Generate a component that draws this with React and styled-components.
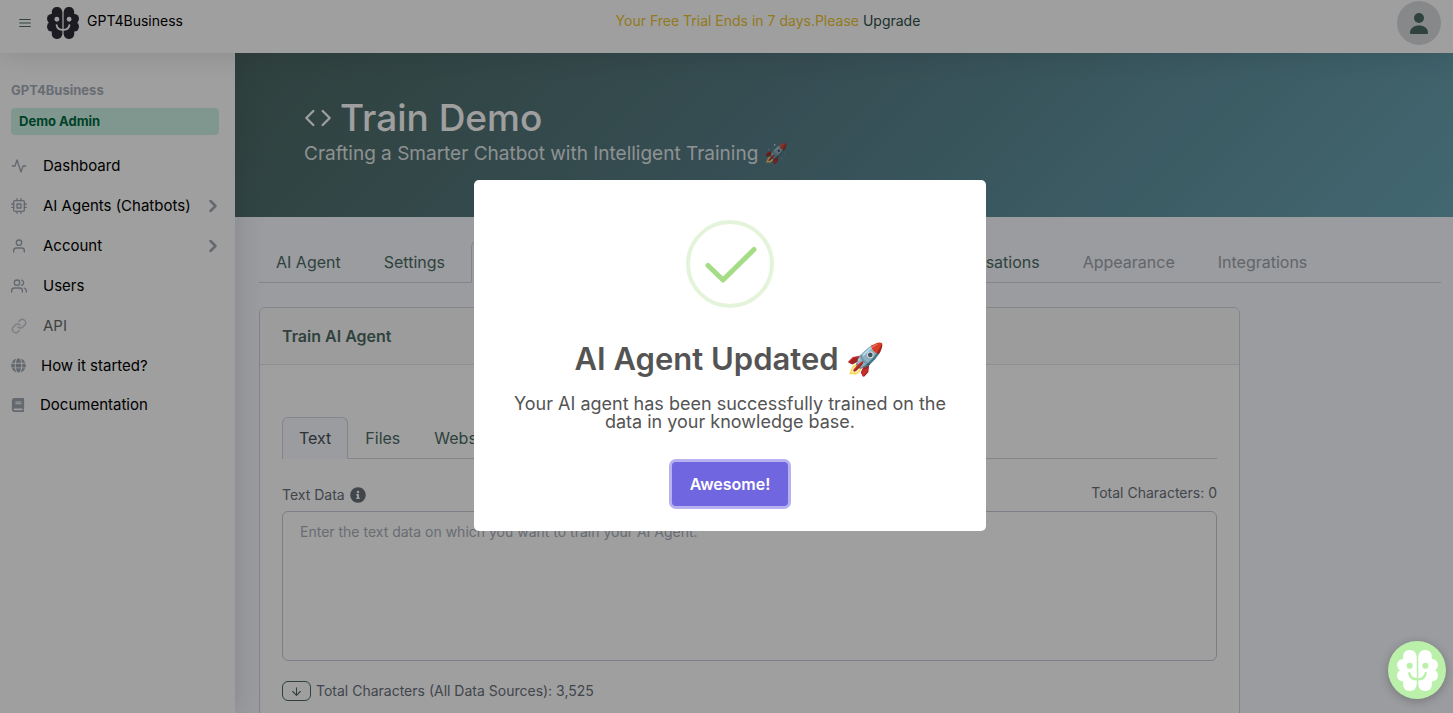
// App.jsx
import React from "react";
import styled, { createGlobalStyle } from "styled-components";
import {
  FiActivity,
  FiArrowDown,
  FiChevronRight,
  FiCode,
  FiCpu,
  FiLink,
  FiMenu,
  FiUser,
  FiUsers,
} from "react-icons/fi";
import { FaBook, FaGlobe, FaInfoCircle } from "react-icons/fa";

const GlobalStyle = createGlobalStyle`
  *, *::before, *::after {
    box-sizing: border-box;
  }

  body {
    margin: 0;
    background: #f8faff;
    color: #69707a;
    font-family: Inter, "Open Sans", "Liberation Sans", sans-serif;
    font-size: 16px;
    line-height: 24px;
  }

  a {
    text-decoration: none;
  }

  button, textarea {
    font: inherit;
  }
`;

const Page = styled.div`
  height: 100vh;
  display: flex;
  flex-direction: column;
  overflow: hidden;
`;

const TopNav = styled.header`
  position: relative;
  z-index: 2;
  display: flex;
  align-items: center;
  padding: 1px 12px 8px 18px;
  background: #fff;
  box-shadow: 0 2px 28px rgba(33, 40, 50, 0.15);
  font-size: 14px;
`;

const MenuButton = styled.button`
  display: flex;
  padding: 0;
  border: 0;
  background: none;
  color: #4c6b64;
`;

const Brand = styled.a`
  display: flex;
  align-items: center;
  gap: 8px;
  margin-left: 15px;
  color: #000;

  span {
    padding-bottom: 4px;
  }
`;

const TrialNotice = styled.p`
  flex: 1;
  margin: 0;
  padding: 0 44px 4px 0;
  text-align: center;
  color: #edc332;

  a {
    color: #2f4f4a;
  }
`;

const Avatar = styled.button`
  display: flex;
  align-items: center;
  justify-content: center;
  width: 44px;
  height: 44px;
  padding: 0;
  border: 0;
  border-radius: 50%;
  background: #d8dbde;
  color: #4c6b64;
`;

const Body = styled.div`
  flex: 1;
  display: flex;
  min-height: 0;
`;

const Sidebar = styled.nav`
  position: relative;
  z-index: 1;
  flex: 0 0 235px;
  min-width: 0;
  padding: 29px 16px 0 11px;
  background: #fff;
  box-shadow: 2px 0 28px rgba(33, 40, 50, 0.15);
`;

const SidebarHeading = styled.div`
  margin-bottom: 10px;
  color: #a7aeb8;
  font-size: 13px;
  font-weight: 700;
  line-height: 16px;
`;

const RoleBadge = styled.div`
  margin-bottom: 11px;
  padding: 5px 8px 6px;
  border-radius: 4px;
  background: #cdf3e5;
  color: #006b41;
  font-size: 13px;
  font-weight: 700;
  line-height: 16px;
`;

const SidebarLink = styled.a`
  display: flex;
  align-items: center;
  gap: ${(props) => (props.$solid ? "15px" : "16px")};
  height: ${(props) => (props.$solid ? "39px" : "40px")};
  color: #000;
  font-size: 15px;
  opacity: ${(props) => (props.$disabled ? 0.6 : 1)};

  span {
    flex: 1;
    min-width: 0;
    white-space: nowrap;
  }

  svg {
    flex: none;
    color: #a0a7b3;
  }

  svg:last-child {
    margin-right: -4px;
  }
`;

const Content = styled.main`
  flex: 1;
  min-width: 0;
`;

const Hero = styled.section`
  height: 164px;
  padding: 42px 69px 0;
  background: linear-gradient(135deg, #4c6862 0%, #577e88 45%, #6aa6b5 100%);
  color: #fff;

  h1 {
    display: flex;
    align-items: center;
    gap: 8px;
    margin: 0;
    font-size: 37px;
    font-weight: 500;
    line-height: 46px;
  }

  p {
    margin: 0;
    color: rgba(255, 255, 255, 0.85);
    font-size: 19px;
    line-height: 26px;
  }
`;

const Section = styled.div`
  padding: 24px 12px 0 24px;
`;

const Tabs = styled.div`
  display: flex;
  gap: ${(props) => props.$gap || "0"};
  border-bottom: 1px solid #d0d5de;
`;

const Tab = styled.button`
  margin-bottom: -1px;
  padding: 8px 16px;
  border: 1px solid transparent;
  border-radius: 6px 6px 0 0;
  background: none;
  color: #4c6b64;
  white-space: nowrap;

  &[aria-selected="true"] {
    border-color: #d0d5de #d0d5de #f8faff;
    background: #f8faff;
    color: #495057;
  }

  &:disabled {
    color: #9da3ab;
  }
`;

const Grid = styled.div`
  display: grid;
  grid-template-columns: repeat(12, 1fr);
  gap: 24px;
  margin-top: 24px;
`;

const Card = styled.section`
  grid-column: span 10;
  border: 1px solid #d0d5de;
  border-radius: 6px;
  background: #fff;
`;

const CardHeader = styled.h2`
  margin: 0;
  padding: 16px 22px;
  border-bottom: 1px solid #e2e5ea;
  border-radius: 6px 6px 0 0;
  background: #fbfbfb;
  color: #4c6b64;
  font-size: 16px;
  font-weight: 600;
  line-height: 24px;
`;

const CardBody = styled.div`
  padding: 52px 22px 40px;
`;

const FieldHeader = styled.div`
  display: flex;
  justify-content: space-between;
  align-items: center;
  margin: 20px 0 4px;
  font-size: 14px;

  label {
    display: flex;
    align-items: center;
    gap: 5px;
    padding-top: 4px;
  }
`;

const TextArea = styled.textarea`
  display: block;
  width: 100%;
  height: 150px;
  padding: 8px 17px;
  border: 1px solid #c5ccd6;
  border-radius: 6px;
  background: #fff;
  font-size: 14px;
  resize: none;

  &::placeholder {
    color: #a7aeb8;
  }
`;

const Totals = styled.div`
  display: flex;
  align-items: center;
  gap: 5px;
  margin-top: 18px;
  font-size: 14px;
`;

const ExpandButton = styled.button`
  display: flex;
  align-items: center;
  justify-content: center;
  width: 29px;
  height: 20px;
  padding: 0;
  border: 1px solid #4c6b64;
  border-radius: 6px;
  background: none;
  color: #4c6b64;
`;

const Backdrop = styled.div`
  position: fixed;
  inset: 0;
  z-index: 10;
  display: flex;
  align-items: center;
  justify-content: center;
  padding: 0 0 2px 7px;
  background: rgba(0, 0, 0, 0.375);
`;

const Modal = styled.div`
  display: flex;
  flex-direction: column;
  align-items: center;
  width: 512px;
  max-width: 100%;
  padding: 40px 28px 25px;
  border-radius: 5px;
  background: #fff;
  color: #545454;
  text-align: center;

  h2 {
    margin: 32px 0 0;
    font-size: 31px;
    font-weight: 600;
    line-height: 38px;
  }

  p {
    margin: 17px 0 31px;
    font-size: 18px;
    line-height: 18px;
  }
`;

const ConfirmButton = styled.button`
  padding: 10px 18px;
  border: 0;
  border-radius: 4px;
  background: #7066e0;
  box-shadow: 0 0 0 3px rgba(112, 102, 224, 0.5);
  color: #fff;
  font-weight: 600;
  outline: none;
`;

const ChatBubble = styled.button`
  position: fixed;
  right: 7px;
  bottom: 14px;
  z-index: 11;
  display: flex;
  align-items: center;
  justify-content: center;
  width: 58px;
  height: 58px;
  padding: 0;
  border: 0;
  border-radius: 50%;
  background: #baf0aa;
  box-shadow: 0 2px 10px rgba(0, 0, 0, 0.25);
`;

const BrainLogo = ({ size, color, face }) => (
  <svg width={size} height={size} viewBox="0 0 120 120" aria-hidden="true">
    <g fill={color}>
      <rect x="18" y="0" width="39" height="120" rx="18" />
      <rect x="30" y="18" width="27" height="84" />
      <circle cx="18" cy="44" r="18" />
      <circle cx="18" cy="74" r="18" />
      <rect x="63" y="0" width="39" height="120" rx="18" />
      <rect x="63" y="18" width="27" height="84" />
      <circle cx="102" cy="44" r="18" />
      <circle cx="102" cy="74" r="18" />
    </g>
    <g fill={face}>
      <circle cx="37" cy="46" r="9" />
      <circle cx="83" cy="46" r="9" />
    </g>
    <path
      d="M36 68C38 80 48 86 60 86S82 80 84 68"
      fill="none"
      stroke={face}
      strokeWidth="7"
      strokeLinecap="round"
    />
  </svg>
);

const PersonIcon = () => (
  <svg width="18" height="21" viewBox="0 0 18 21" fill="currentColor" aria-hidden="true">
    <circle cx="9" cy="5" r="5" />
    <path d="M1 21q-1 0-1-1C0 15 4 12.500 9 12.500S18 15 18 20q0 1-1 1Z" />
  </svg>
);

const SuccessIcon = () => (
  <svg width="88" height="88" viewBox="0 0 88 88" fill="none" aria-hidden="true">
    <circle cx="44" cy="44" r="42" stroke="#a5dc86" strokeOpacity="0.3" strokeWidth="4" />
    <path
      d="M22 45.500L37 60L68 29.500"
      stroke="#a5dc86"
      strokeWidth="5"
      strokeLinecap="round"
      strokeLinejoin="round"
    />
  </svg>
);

const sidebarLinks = [
  { label: "Dashboard", icon: <FiActivity size={16} /> },
  { label: "AI Agents (Chatbots)", icon: <FiCpu size={16} />, nested: true },
  { label: "Account", icon: <FiUser size={16} />, nested: true },
  { label: "Users", icon: <FiUsers size={16} /> },
  { label: "API", icon: <FiLink size={16} />, disabled: true },
  { label: "How it started?", icon: <FaGlobe size={15} />, solid: true },
  { label: "Documentation", icon: <FaBook size={14} />, solid: true },
];

const agentTabs = [
  { label: "AI Agent" },
  { label: "Settings" },
  { label: "Train AI Agent", active: true },
  { label: "Test AI Agent" },
  { label: "Embed Codes" },
  { label: "Conversations" },
  { label: "Appearance", disabled: true },
  { label: "Integrations", disabled: true },
];

const sourceTabs = [
  { label: "Text", active: true },
  { label: "Files" },
  { label: "Website" },
];

const TabList = ({ tabs, gap, label }) => (
  <Tabs role="tablist" aria-label={label} $gap={gap}>
    {tabs.map((tab) => (
      <Tab
        key={tab.label}
        type="button"
        role="tab"
        aria-selected={Boolean(tab.active)}
        disabled={tab.disabled}>
        {tab.label}
      </Tab>
    ))}
  </Tabs>
);

const App = () => {
  return (
    <>
      <GlobalStyle />
      <Page>
        <TopNav>
          <MenuButton type="button" aria-label="Toggle sidebar">
            <FiMenu size={14} />
          </MenuButton>
          <Brand href="#">
            <BrainLogo size={32} color="#2c2c36" face="#fff" />
            <span>GPT4Business</span>
          </Brand>
          <TrialNotice>
            Your Free Trial Ends in 7 days.Please <a href="#upgrade">Upgrade</a>
          </TrialNotice>
          <Avatar type="button" aria-label="User menu">
            <PersonIcon />
          </Avatar>
        </TopNav>

        <Body>
          <Sidebar>
            <SidebarHeading>GPT4Business</SidebarHeading>
            <RoleBadge>Demo Admin</RoleBadge>
            {sidebarLinks.map((link) => (
              <SidebarLink
                key={link.label}
                href="#"
                $solid={link.solid}
                $disabled={link.disabled}>
                {link.icon}
                <span>{link.label}</span>
                {link.nested && <FiChevronRight size={20} strokeWidth={3} />}
              </SidebarLink>
            ))}
          </Sidebar>

          <Content>
            <Hero>
              <h1>
                <FiCode size={28} />
                Train Demo
              </h1>
              <p>Crafting a Smarter Chatbot with Intelligent Training 🚀</p>
            </Hero>

            <Section>
              <TabList tabs={agentTabs} gap="9px" label="Agent sections" />
              <Grid>
                <Card>
                  <CardHeader>Train AI Agent</CardHeader>
                  <CardBody>
                    <TabList tabs={sourceTabs} label="Data sources" />
                    <FieldHeader>
                      <label htmlFor="textData">
                        Text Data <FaInfoCircle size={16} />
                      </label>
                      <span>Total Characters: 0</span>
                    </FieldHeader>
                    <TextArea
                      id="textData"
                      placeholder="Enter the text data on which you want to train your AI Agent."
                    />
                    <Totals>
                      <ExpandButton type="button" aria-label="Show data sources">
                        <FiArrowDown size={13} />
                      </ExpandButton>
                      Total Characters (All Data Sources): 3,525
                    </Totals>
                  </CardBody>
                </Card>
              </Grid>
            </Section>
          </Content>
        </Body>
      </Page>

      <Backdrop>
        <Modal role="dialog" aria-modal="true" aria-labelledby="modalTitle">
          <SuccessIcon />
          <h2 id="modalTitle">AI Agent Updated 🚀</h2>
          <p>Your AI agent has been successfully trained on the data in your knowledge base.</p>
          <ConfirmButton type="button">Awesome!</ConfirmButton>
        </Modal>
      </Backdrop>

      <ChatBubble type="button" aria-label="Open chat">
        <BrainLogo size={41} color="#fff" face="#baf0aa" />
      </ChatBubble>
    </>
  );
};

export default App;
